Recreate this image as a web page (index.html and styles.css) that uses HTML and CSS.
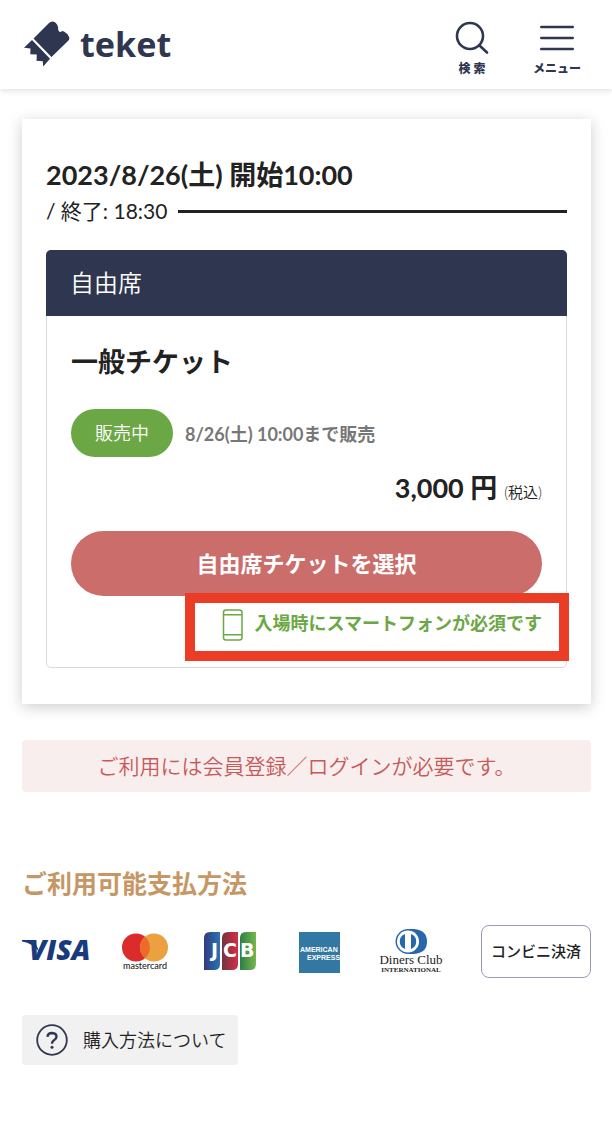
FILE: index.html
```html
<!DOCTYPE html>
<html lang="ja">
<head>
<meta charset="utf-8">
<meta name="viewport" content="width=device-width, initial-scale=1">
<title>teket</title>
<link rel="stylesheet" href="styles.css">
</head>
<body>
<header class="site-header">
  <a class="brand" href="#">
    <svg class="brand-mark" width="46" height="46" viewBox="0 0 46 46" aria-hidden="true">
      <path fill="#2f3650" d="M9.500 17.500L25 2Q27.500-.500 30.500 1Q34 3 34.200 7.500Q34 9.500 34.800 10Q35.500 11.500 37 10.800Q38.500 9.500 40 10.500Q43 12 44.800 15.500Q46 18 44.500 19.500L27.500 36Z"/>
      <path fill="#2f3650" d="M8 19L26 37.800L19.200 45.500L18.800 40.300L12.500 39.700L12.800 33.500L6.300 33.300L6.500 27.500L0 26.800Z"/>
    </svg>
    <span class="brand-name">teket</span>
  </a>
  <nav class="header-actions">
    <button class="header-action" type="button">
      <svg width="34" height="34" viewBox="0 0 34 34" fill="none" stroke="#2f3650" stroke-width="2.600" stroke-linecap="round" aria-hidden="true">
        <circle cx="15" cy="15" r="13"/><path d="M24.500 24.500L32 31.500"/>
      </svg>
      <span>検 索</span>
    </button>
    <button class="header-action" type="button">
      <svg width="34" height="34" viewBox="0 0 34 34" fill="none" stroke="#2f3650" stroke-width="2.600" stroke-linecap="round" aria-hidden="true">
        <path d="M1.300 6H32.700M1.300 17H32.700M1.300 28H32.700"/>
      </svg>
      <span>メニュー</span>
    </button>
  </nav>
</header>

<main class="page">
  <section class="event-card">
    <h1 class="event-start">2023/8/26(土) 開始10:00</h1>
    <p class="event-end">/ 終了: 18:30</p>

    <article class="seat">
      <h2 class="seat-name">自由席</h2>
      <div class="seat-body">
        <h3 class="ticket-name">一般チケット</h3>
        <div class="sale">
          <span class="sale-badge">販売中</span>
          <span class="sale-until">8/26(土) 10:00まで販売</span>
        </div>
        <p class="price"><strong>3,000 円</strong> <small>(税込)</small></p>
        <button class="select-button" type="button">自由席チケットを選択</button>
        <p class="phone-note">
          <svg width="22" height="32" viewBox="0 0 22 32" fill="none" stroke="#6ba845" stroke-width="1.500" aria-hidden="true">
            <rect x="1.500" y="1" width="18.500" height="30" rx="2.500"/><path d="M1.500 5.800H20M1.500 25.800H20"/>
          </svg>
          <span>入場時にスマートフォンが必須です</span>
        </p>
      </div>
    </article>
  </section>

  <p class="login-notice">ご利用には会員登録／ログインが必要です。</p>

  <section class="payment">
    <h2 class="payment-title">ご利用可能支払方法</h2>
    <ul class="payment-list">
      <li>
        <svg width="72" height="48" viewBox="0 0 72 48" role="img" aria-label="VISA">
          <path fill="#193a7c" d="M0 12H12L18 25Q11 15 0 13.500Z"/>
          <text class="logo-visa" x="7" y="32">VISA</text>
        </svg>
      </li>
      <li>
        <svg width="48" height="48" viewBox="0 0 48 48" role="img" aria-label="mastercard">
          <circle cx="15" cy="19.500" r="14" fill="#dc2b2b"/>
          <circle cx="33" cy="19.500" r="14" fill="#eba13f"/>
          <path fill="#ee6a2b" d="M24 8.800A14 14 0 0 1 24 30.200A14 14 0 0 1 24 8.800Z"/>
          <text class="logo-mastercard" x="24" y="41" text-anchor="middle">mastercard</text>
        </svg>
      </li>
      <li>
        <svg width="54" height="48" viewBox="0 0 54 48" role="img" aria-label="JCB">
          <defs>
            <linearGradient id="jcb-blue"><stop stop-color="#343a80"/><stop offset="1" stop-color="#2973b5"/></linearGradient>
            <linearGradient id="jcb-red"><stop stop-color="#74333f"/><stop offset="1" stop-color="#d42e48"/></linearGradient>
            <linearGradient id="jcb-green"><stop stop-color="#2c8045"/><stop offset="1" stop-color="#77b650"/></linearGradient>
          </defs>
          <path fill="url(#jcb-blue)" d="M1 10Q1 4 7 4H17V36Q17 42 11 42H1Z"/>
          <path fill="url(#jcb-red)" d="M19 10Q19 4 25 4H35V36Q35 42 29 42H19Z"/>
          <path fill="url(#jcb-green)" d="M37 10Q37 4 43 4H53V36Q53 42 47 42H37Z"/>
          <text class="logo-jcb" x="8 20 37" y="29">JCB</text>
        </svg>
      </li>
      <li>
        <svg width="44" height="48" viewBox="0 0 44 48" role="img" aria-label="AMERICAN EXPRESS">
          <path fill="#3278a3" d="M2 4H43V45H2Z"/>
          <text class="logo-amex" x="3" y="24">AMERICAN</text>
          <text class="logo-amex" x="10" y="32">EXPRESS</text>
        </svg>
      </li>
      <li>
        <svg width="64" height="48" viewBox="0 0 64 48" role="img" aria-label="Diners Club INTERNATIONAL">
          <path fill="#2767ac" d="M29 1H35Q48 2 48 13.500Q48 25 35 26H29A12.500 12.500 0 0 1 29 1Z"/>
          <circle cx="29" cy="13.500" r="11" fill="#fff"/>
          <path fill="#2767ac" d="M26 6A8 8 0 0 0 26 21ZM32 6A8 8 0 0 1 32 21Z"/>
          <text class="logo-diners" x="32" y="36" text-anchor="middle">Diners Club</text>
          <text class="logo-diners-sub" x="32" y="44" text-anchor="middle">INTERNATIONAL</text>
        </svg>
      </li>
      <li class="convenience">コンビニ決済</li>
    </ul>
  </section>

  <a class="help-link" href="#">
    <svg width="32" height="32" viewBox="0 0 32 32" aria-hidden="true">
      <circle cx="16" cy="16" r="14.800" fill="none" stroke="#2f3650" stroke-width="1.800"/>
      <path d="M11.500 12.800Q11.800 9 16 9Q20.500 9.200 20.500 12.800Q20.500 14.800 18 16.300Q16 17.500 16 19.800" fill="none" stroke="#2f3650" stroke-width="2.400"/>
      <circle cx="16" cy="23.200" r="1.500" fill="#2f3650"/>
    </svg>
    <span>購入方法について</span>
  </a>
</main>
</body>
</html>
```

FILE: styles.css
```css
* {
  box-sizing: border-box;
}

body,
h1,
h2,
h3,
p,
ul {
  margin: 0;
  padding: 0;
}

body {
  background: #fff;
  color: #222;
  font-family: Lato, "Noto Sans CJK JP", sans-serif;
}

a {
  color: inherit;
  text-decoration: none;
}

button {
  border: 0;
  padding: 0;
  background: none;
  color: inherit;
  font-family: inherit;
  cursor: pointer;
}

svg {
  display: block;
  flex: none;
}

.site-header {
  display: flex;
  justify-content: space-between;
  align-items: flex-start;
  padding: 21px 31px 12px 24px;
  box-shadow: 0 2px 6px rgba(0, 0, 0, 0.12);
}

.brand {
  display: flex;
  align-items: center;
  gap: 10px;
  color: #2f3650;
}

.brand-name {
  font-family: "Noto Sans", sans-serif;
  font-size: 34px;
  font-weight: 700;
  line-height: 46px;
}

.header-actions {
  display: flex;
  gap: 37px;
}

.header-action {
  display: flex;
  flex-direction: column;
  align-items: center;
  gap: 6px;
  min-width: 48px;
  color: #2f3650;
  font-size: 12px;
  font-weight: 900;
  line-height: 16px;
}

.page {
  padding: 30px 21px 64px 22px;
}

.event-card {
  padding: 38px 24px 36px;
  background: #fff;
  box-shadow: 0 3px 14px rgba(0, 0, 0, 0.2);
}

.event-start {
  font-size: 27px;
  font-weight: 700;
  line-height: 36px;
}

.event-end {
  display: flex;
  align-items: center;
  gap: 11px;
  font-size: 21px;
  font-weight: 400;
  line-height: 36px;
}

.event-end::after {
  content: "";
  flex: 1;
  height: 3px;
  background: #222;
}

.seat {
  margin-top: 21px;
  border: 1px solid #d9dae0;
  border-radius: 5px;
}

.seat-name {
  margin: -1px -1px 0;
  padding: 15px 24px;
  border-radius: 5px 5px 0 0;
  background: #2f3650;
  color: #fff;
  font-size: 24px;
  font-weight: 350;
  line-height: 36px;
}

.seat-body {
  padding: 28px 24px 26px;
}

.ticket-name {
  font-size: 27px;
  font-weight: 700;
  line-height: 36px;
}

.sale {
  display: flex;
  align-items: center;
  gap: 12px;
  margin-top: 29px;
  font-size: 18px;
}

.sale-badge {
  padding: 0 24px;
  border-radius: 24px;
  background: #6ba845;
  color: #fff;
  font-weight: 350;
  line-height: 48px;
}

.sale-until {
  color: #777;
  font-weight: 700;
}

.price {
  margin-top: 13px;
  font-size: 27px;
  line-height: 36px;
  text-align: right;
}

.price small {
  font-size: 15px;
  font-weight: 350;
}

.select-button {
  display: block;
  width: 100%;
  margin-top: 21px;
  border-radius: 33px;
  background: #cb6d6a;
  color: #fff;
  font-size: 22px;
  font-weight: 700;
  line-height: 65px;
}

.phone-note {
  position: relative;
  display: flex;
  align-items: flex-start;
  gap: 11px;
  width: fit-content;
  margin: 13px 0 0 auto;
  color: #6ba845;
  font-size: 18px;
  font-weight: 700;
  line-height: 28px;
}

.phone-note::after {
  content: "";
  position: absolute;
  inset: -16px -27px -20px -37px;
  border: 10px solid #eb3d25;
}

.login-notice {
  margin-top: 36px;
  padding: 8px;
  border-radius: 4px;
  background: #f8eeed;
  color: #c65a59;
  font-size: 21px;
  font-weight: 350;
  line-height: 36px;
  text-align: center;
}

.payment-title {
  margin-top: 73px;
  color: #c69765;
  font-size: 25px;
  font-weight: 700;
  line-height: 36px;
}

.payment-list {
  display: grid;
  grid-template-columns: 99fr 82fr 94fr 82fr 102fr auto;
  align-items: center;
  margin-top: 24px;
  list-style: none;
}

.convenience {
  padding: 0 9px;
  border: 1px solid #9a9bb0;
  border-radius: 8px;
  font-size: 15px;
  font-weight: 500;
  line-height: 51px;
}

.help-link {
  display: flex;
  align-items: center;
  gap: 15px;
  width: fit-content;
  margin-top: 37px;
  padding: 9px 12px 9px 14px;
  border-radius: 4px;
  background: #f1f1f1;
  font-size: 18px;
  font-weight: 350;
  line-height: 32px;
}

.logo-visa {
  fill: #193a7c;
  font: italic 800 28px "Open Sans", sans-serif;
}

.logo-mastercard {
  fill: #222;
  font: 500 9px Lato, sans-serif;
}

.logo-jcb {
  fill: #fff;
  font: 700 19px "DejaVu Sans", sans-serif;
}

.logo-amex {
  fill: #fff;
  font: 700 7px "Liberation Sans", sans-serif;
}

.logo-diners {
  fill: #222;
  font: 13px "Liberation Serif", serif;
}

.logo-diners-sub {
  fill: #222;
  font: 700 7px "Liberation Serif", serif;
}
```
